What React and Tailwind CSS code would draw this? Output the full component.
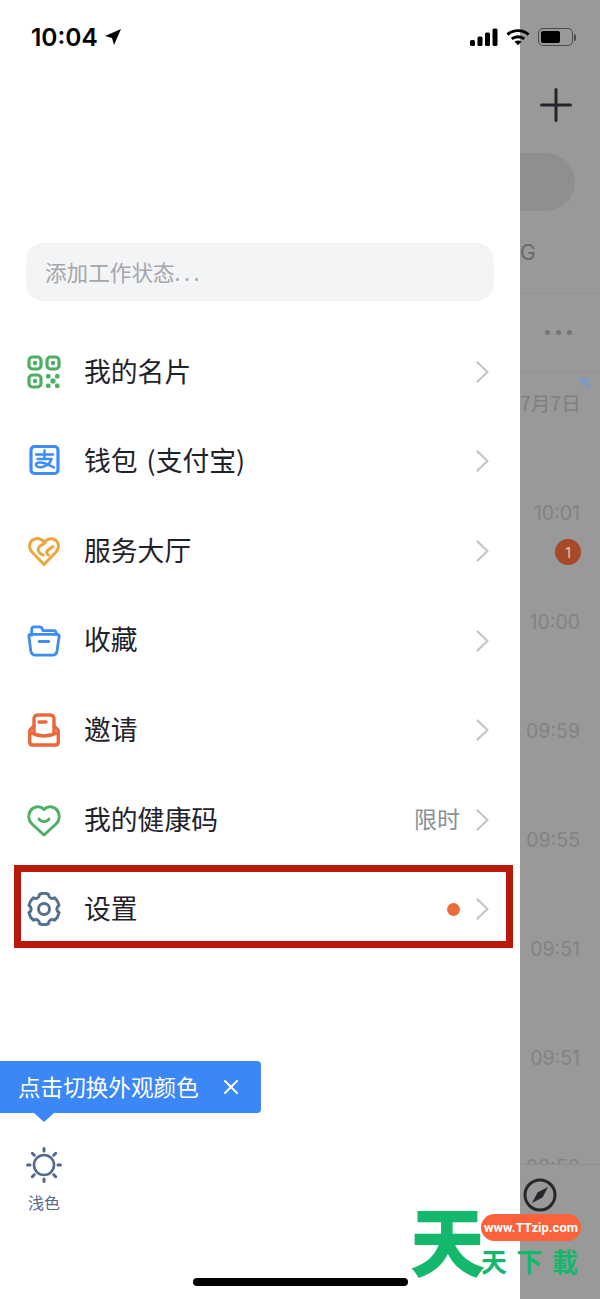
import React from 'react';

const CJK = 'font-["Noto_Sans_CJK_SC","Noto_Sans",sans-serif]';

const QrIcon = () => (
    <svg width="34" height="34" viewBox="0 0 34 34" fill="none" stroke="#4caf63" strokeWidth="3.200">
        <rect x="2" y="2" width="12" height="12" rx="3.500" />
        <rect x="20" y="2" width="12" height="12" rx="3.500" />
        <rect x="2" y="20" width="12" height="12" rx="3.500" />
        <g fill="#4caf63" stroke="none">
            <rect x="6" y="6" width="4" height="4" rx="1" />
            <rect x="24" y="6" width="4" height="4" rx="1" />
            <rect x="6" y="24" width="4" height="4" rx="1" />
            <rect x="19" y="19" width="4.500" height="4.500" rx="1.500" />
            <rect x="28" y="19" width="4.500" height="4.500" rx="1.500" />
            <rect x="23.500" y="23.500" width="5" height="5" rx="1.500" />
            <rect x="19" y="28.500" width="4.500" height="4.500" rx="1.500" />
            <rect x="28" y="28.500" width="4.500" height="4.500" rx="1.500" />
        </g>
    </svg>
);

const AlipayIcon = () => (
    <svg width="34" height="34" viewBox="0 0 34 34" fill="none" stroke="#3d8bf5">
        <rect x="4" y="2.500" width="27" height="27" rx="3.500" strokeWidth="3.200" />
        <path d="M9 10.500h17M17.500 6.500v7.500M10.500 15h14c-1 3.500-4.500 7-9.500 8-3 .6-6-.3-6-2.400 0-3.200 7-3.400 18 2.900" strokeWidth="2.500" strokeLinecap="round" strokeLinejoin="round" />
    </svg>
);

const HandsHeartIcon = () => (
    <svg width="34" height="34" viewBox="0 0 34 34" fill="none" stroke="#eea63c" strokeWidth="3" strokeLinecap="round" strokeLinejoin="round">
        <path d="M16 21c-4-1.500-6.500-5.500-3.500-8.500L18 9c-2.500-3-5.500-4.800-9-4.300C3 5.500.5 12.500 4.500 17.500L17 30.500l12.500-13c4-5 1.500-12-4.500-12.800-3-.4-5.500.8-8 4.300" />
        <path d="M26 12.500 20.500 16.500c-1.500 1.200-1 3 1 4.500" />
    </svg>
);

const FolderIcon = () => (
    <svg width="36" height="34" viewBox="0 0 36 34" fill="none" stroke="#3d8bf5" strokeWidth="3" strokeLinecap="round" strokeLinejoin="round">
        <path d="M5 11V4.500C5 3 6 2 7.500 2h6c1 0 1.800.5 2.300 1.300L17 6h11.500C30.500 6 31 7.500 31 10" />
        <path d="M3.500 10h29c1 0 1.700.9 1.500 2l-2.200 15.500c-.5 3-2.500 4.500-5 4.500H9c-2.700 0-4.600-1.500-5-4.500L2 12c-.2-1.100.5-2 1.500-2Z" />
        <path d="M13 17.500h10" />
    </svg>
);

const InviteIcon = () => (
    <svg width="34" height="34" viewBox="0 0 34 34" fill="none" stroke="#e9693c" strokeWidth="3.400" strokeLinecap="round" strokeLinejoin="round">
        <path d="M7 20V5.500C7 3.500 8.500 2 10.500 2h13C25.500 2 27 3.500 27 5.500V20" />
        <path d="M7 13 3.500 16.500c-.5.500-.8 1-.8 1.800V29c0 2 1 3 3 3h22.600c2 0 3-1 3-3V18.300c0-.8-.3-1.300-.8-1.800L27 13" />
        <path d="M3 19.500c9 4.500 19 4.500 28 0" />
        <path d="M12 9h7" />
    </svg>
);

const SmileHeartIcon = () => (
    <svg width="34" height="34" viewBox="0 0 34 34" fill="none" stroke="#4caf63" strokeWidth="3" strokeLinecap="round" strokeLinejoin="round">
        <path d="M17 32 5 21C1.500 17.500 1 12.500 3 8.500 5.500 3.500 12.500 2 17 6.500 21.500 2 28.500 3.500 31 8.500c2 4 1.500 9-2 12.500L17 32Z" />
        <path d="M12 16c2.500 3.500 7.500 3.500 10 0" />
    </svg>
);

// six toothed cog, outline built from the angle of each tooth
const cogPath = () => {
    const pt = (r, a) => `${(17 + r * Math.cos(a)).toFixed(2)} ${(17 + r * Math.sin(a)).toFixed(2)}`;
    let d = '';
    for (let i = 0; i < 6; i++) {
        const a = (Math.PI / 3) * i - Math.PI / 2;
        d += `${i === 0 ? 'M' : 'L'}${pt(15.5, a - 0.28)}`;
        d += `Q${pt(16.4, a)} ${pt(15.5, a + 0.28)}`;
        d += `Q${pt(10.5, a + Math.PI / 6)} ${pt(15.5, a + Math.PI / 3 - 0.28)}`;
    }
    return `${d}Z`;
};

const GearIcon = () => (
    <svg width="34" height="34" viewBox="0 0 34 34" fill="none" stroke="#56708f" strokeWidth="3" strokeLinejoin="round">
        <path d={cogPath()} />
        <circle cx="17" cy="17" r="5.500" />
    </svg>
);

const SunIcon = () => (
    <svg width="36" height="36" viewBox="0 0 36 36" fill="none" stroke="#52698e" strokeLinecap="round">
        <circle cx="18" cy="18" r="10" strokeWidth="2.600" />
        <path d="M18 1.500v2.500M18 32v2.500M1.500 18H4M32 18h2.500M6.300 6.300l2 2M27.700 27.700l2 2M6.300 29.700l2-2M27.700 8.300l2-2" strokeWidth="3" />
    </svg>
);

const Chevron = () => (
    <svg width="13" height="22" viewBox="0 0 13 22" fill="none" stroke="#c4c4c4" strokeWidth="2.200" strokeLinecap="round" strokeLinejoin="round">
        <path d="M1.500 1.500 11.500 11 1.500 20.500" />
    </svg>
);

const MenuRow = ({ icon: Icon, label, extra }) => (
    <div className="flex h-[89.6px] items-center pl-[27px] pr-[31px]">
        <div className="flex w-[34px] shrink-0 justify-center"><Icon /></div>
        <div className={`ml-[23px] -translate-y-[1px] flex-1 text-[26.800px] text-[#1f2329] [word-spacing:3px] ${CJK}`}>{label}</div>
        {extra}
        <div className="ml-[16px]"><Chevron /></div>
    </div>
);

const TimeRow = ({ time, children }) => (
    <div className="relative h-[109px] pr-[20px] pt-[6px] text-right text-[19.500px] leading-[28px] text-[#838383] font-['Inter',sans-serif]">
        {time}
        {children}
    </div>
);

const menu = [
    { icon: QrIcon, label: '我的名片' },
    { icon: AlipayIcon, label: '钱包 (支付宝)' },
    { icon: HandsHeartIcon, label: '服务大厅' },
    { icon: FolderIcon, label: '收藏' },
    { icon: InviteIcon, label: '邀请' },
    { icon: SmileHeartIcon, label: '我的健康码', extra: <span className={`-translate-y-[2px] text-[23px] text-[#8b9097] ${CJK}`}>限时</span> },
    { icon: GearIcon, label: '设置', extra: <span className="h-[13px] w-[13px] rounded-full bg-[#e86d3b]" /> },
];

const App = () => {
    return (
        <div className="relative flex h-[1299px] w-[600px] overflow-hidden bg-white">
            {/* Drawer */}
            <div className="w-[520px] shrink-0 bg-white">
                <div className="h-[243px] pl-[31px] pt-[20px]">
                    <div className="flex items-center gap-[7px]">
                        <span className="text-[24.500px] font-semibold leading-[34px] text-black font-['Inter',sans-serif]">10:04</span>
                        <svg width="16" height="16" viewBox="0 0 16 16"><path d="M16 0 0 7l7 2 2 7Z" fill="#000" /></svg>
                    </div>
                </div>

                <div className={`mx-[26px] flex h-[58px] items-center rounded-[18px] bg-[#f3f4f6] pl-[19px] text-[21.600px] text-[#a3a6aa] ${CJK}`}>
                    添加工作状态<span className="tracking-[3.500px]">...</span>
                </div>

                <div className="mt-[26px]">
                    {menu.map(m => <MenuRow key={m.label} {...m} />)}
                </div>

                {/* Tooltip */}
                <div className="relative mt-[107px] flex h-[52px] w-[261px] items-center justify-between rounded-r-[4px] bg-[#3c87f6] pl-[18px] pr-[22px]">
                    <span className={`text-[22.600px] text-white ${CJK}`}>点击切换外观颜色</span>
                    <svg width="16" height="16" viewBox="0 0 16 16" fill="none" stroke="#fff" strokeWidth="2" strokeLinecap="round"><path d="m2 2 12 12M14 2 2 14" /></svg>
                    <div className="absolute left-[34px] top-[52px] h-0 w-0 border-x-[10px] border-t-[9px] border-x-transparent border-t-[#3c87f6]" />
                </div>

                <div className="mt-[34px] flex w-[88px] flex-col items-center">
                    <SunIcon />
                    <span className={`mt-[7px] text-[16px] leading-[24px] text-[#56698a] ${CJK}`}>浅色</span>
                </div>
            </div>

            {/* Dimmed page behind the drawer */}
            <div className="flex h-full w-[80px] shrink-0 flex-col overflow-hidden bg-[#999999]">
                <div className="flex h-[153px] justify-end pr-[28px] pt-[88px]">
                    <svg width="32" height="34" viewBox="0 0 32 34" stroke="#22262c" strokeWidth="3" strokeLinecap="round"><path d="M16 1.500v31M1.500 17h29" /></svg>
                </div>
                <div className="h-[58px] w-[55px] rounded-r-[29px] bg-[#8e8f90]" />
                <div className="h-[82px] pt-[28px] text-[21px] leading-[28px] text-[#686868] font-['Inter',sans-serif]">G</div>
                <div className="h-[78px] border-t border-[#929292]">
                    <div className="flex justify-end gap-[6px] pr-[28px] pt-[36px]">
                        <span className="h-[5px] w-[5px] rounded-full bg-[#767676]" />
                        <span className="h-[5px] w-[5px] rounded-full bg-[#767676]" />
                        <span className="h-[5px] w-[5px] rounded-full bg-[#767676]" />
                    </div>
                </div>
                <div className="relative h-[122px] border-t border-[#929292]">
                    <div className="absolute right-[10px] top-[6px] h-0 w-0 border-l-[13px] border-t-[13px] border-l-transparent border-t-[#7f9ac0]" />
                    <div className={`pr-[21px] pt-[17px] text-right text-[19.500px] leading-[28px] text-[#7f7f7f] whitespace-nowrap ${CJK}`}>7月7日</div>
                </div>
                <TimeRow time="10:01">
                    <div className="absolute right-[19px] top-[46px] flex h-[26px] w-[26px] items-center justify-center rounded-full bg-[#a8492a] text-[15px] leading-none text-[#e3c2b6]">1</div>
                </TimeRow>
                <TimeRow time="10:00" />
                <TimeRow time="09:59" />
                <TimeRow time="09:55" />
                <TimeRow time="09:51" />
                <TimeRow time="09:51" />
                {/* last row runs under the tab bar */}
                <div className="h-[17px] overflow-hidden pr-[20px] pt-[6px] text-right text-[19.500px] leading-[28px] text-[#838383] font-['Inter',sans-serif]">09:50</div>
                <div className="flex-1 border-t border-[#8f8f8f] pl-[3px] pt-[13px]">
                    <svg width="34" height="34" viewBox="0 0 34 34" fill="none">
                        <circle cx="17" cy="17" r="15" stroke="#25282d" strokeWidth="3" />
                        <path d="M25 9 19.500 19.500 9 25 14.500 14.500Z" fill="#25282d" />
                    </svg>
                </div>
            </div>

            {/* Status icons sit across the drawer edge */}
            <div className="absolute left-[470px] top-[28px] flex h-[18px] items-center gap-[8px]">
                <svg width="28" height="18" viewBox="0 0 28 18" fill="#000">
                    <rect x="0" y="12" width="5" height="6" rx="1.500" />
                    <rect x="7.500" y="8.500" width="5" height="9.500" rx="1.500" />
                    <rect x="15" y="4.500" width="5" height="13.500" rx="1.500" />
                    <rect x="22.500" y="0.500" width="5" height="17.500" rx="1.500" />
                </svg>
                <svg width="24" height="18" viewBox="0 0 25 18" fill="none" stroke="#000" strokeWidth="3">
                    <path d="M1.500 6.500c6-5.500 16-5.500 22 0" />
                    <path d="M6 11c3.500-3 9.500-3 13 0" />
                    <path d="M12.500 17.500 9 14c2-1.700 5-1.700 7 0Z" fill="#000" stroke="none" />
                </svg>
                <div className="flex items-center">
                    <div className="flex h-[18px] w-[35px] items-center rounded-[5px] border border-[#4a4a4a] p-[2px]">
                        <div className="h-full w-[19px] rounded-[2px] bg-black" />
                    </div>
                    <div className="ml-[1px] h-[7px] w-[2px] rounded-r-sm bg-[#4a4a4a]" />
                </div>
            </div>

            {/* Red annotation box */}
            <div className="absolute left-[14px] top-[865px] h-[83px] w-[499px] border-[7px] border-[#b9190c]" />

            {/* Home indicator */}
            <div className="absolute left-[193px] top-[1278px] h-[8px] w-[215px] rounded-full bg-black" />

            {/* Watermark */}
            <div className={`absolute left-[410px] top-[1199px] text-[75px] font-black leading-[80px] text-[#13b86c] ${CJK}`}>天</div>
            <div className="absolute left-[481px] top-[1214px] flex h-[27px] w-[100px] items-center justify-center rounded-full bg-[#f9623a] text-[13px] font-bold text-white font-['Roboto',sans-serif]">www.TTzip.com</div>
            <div className={`absolute left-[481px] top-[1243px] flex w-[97px] justify-between text-[26px] font-bold leading-[36px] text-[#13b86c] ${CJK}`}>
                <span>天</span><span>下</span><span>載</span>
            </div>
        </div>
    );
};

export default App;
